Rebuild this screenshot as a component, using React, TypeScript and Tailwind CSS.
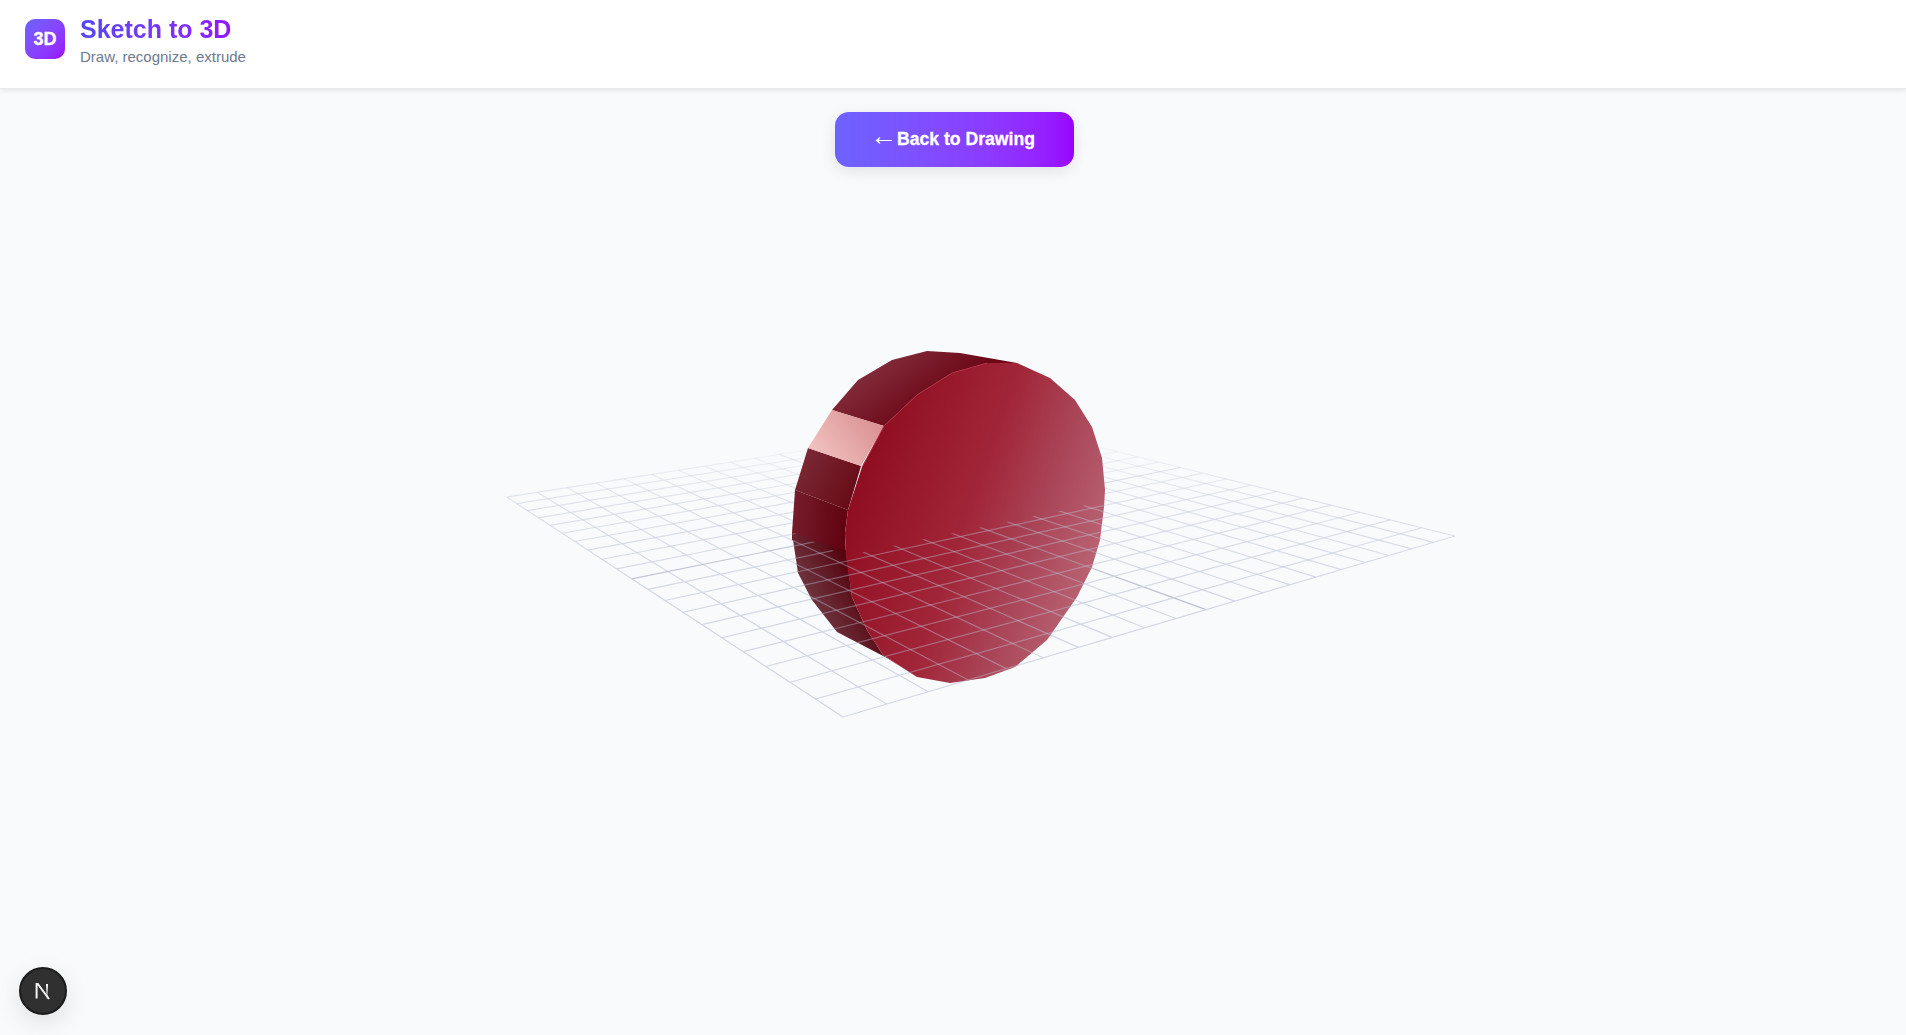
import React from "react"

type Pt = [number, number]

// floor grid corners as seen in the picture: left, front, right, back
const L: Pt = [506.7, 497]
const B: Pt = [843, 717]
const R: Pt = [1455, 536]
const T: Pt = [994, 421]

const project = (u: number, v: number): Pt => {
  const dx1 = B[0] - R[0]
  const dx2 = T[0] - R[0]
  const sx = L[0] - B[0] + R[0] - T[0]
  const dy1 = B[1] - R[1]
  const dy2 = T[1] - R[1]
  const sy = L[1] - B[1] + R[1] - T[1]
  const den = dx1 * dy2 - dx2 * dy1
  const g = (sx * dy2 - dx2 * sy) / den
  const h = (dx1 * sy - sx * dy1) / den
  const a = B[0] - L[0] + g * B[0]
  const b = T[0] - L[0] + h * T[0]
  const d = B[1] - L[1] + g * B[1]
  const e = T[1] - L[1] + h * T[1]
  const w = g * u + h * v + 1
  return [(a * u + b * v + L[0]) / w, (d * u + e * v + L[1]) / w]
}

const DIVISIONS = 20
const gridLines = Array.from({ length: DIVISIONS + 1 }, (_, i) => i / DIVISIONS).flatMap((t, i) => [
  { key: `u${i}`, from: project(t, 0), to: project(t, 1), center: i === DIVISIONS / 2 },
  { key: `v${i}`, from: project(0, t), to: project(1, t), center: i === DIVISIONS / 2 },
])

const points = (pts: Pt[]) => pts.map((p) => p.join(",")).join(" ")

const FACE: Pt[] = [
  [987, 363], [1017, 363], [1050, 378], [1075, 400], [1092, 427], [1102, 458], [1105, 490], [1104, 507],
  [1100, 540], [1092, 567], [1077, 597], [1047, 640], [1015, 667], [985, 678], [950, 683], [917, 677],
  [883, 655], [867, 630], [852, 597], [846, 557], [845, 533], [848, 510], [862, 467], [884, 426], [917, 395], [952, 373],
]

const SILHOUETTE: Pt[] = [
  [927, 351], [960, 353], [1017, 363], [1050, 378], [1075, 400], [1092, 427], [1102, 458], [1105, 490], [1104, 507],
  [1100, 540], [1092, 567], [1077, 597], [1047, 640], [1015, 667], [985, 678], [950, 683], [917, 677], [887, 658],
  [837, 632], [812, 600], [798, 573], [792, 533], [795, 490], [808, 448], [832, 410], [858, 380], [892, 360],
]

const FRONT_OF_DISC: Pt[] = [[770, 522], [845, 556], [1120, 498], [1120, 720], [770, 720]]

const GridLines = ({ normal, center, width }: { normal: string; center: string; width: number }) => (
  <>
    {gridLines.map((l) => (
      <line
        key={l.key}
        x1={l.from[0]}
        y1={l.from[1]}
        x2={l.to[0]}
        y2={l.to[1]}
        stroke={l.center ? center : normal}
        strokeWidth={width}
      />
    ))}
  </>
)

const Scene = () => (
  <svg viewBox="0 167 1906 868" className="block h-[868px] w-[1906px] shrink-0">
    <defs>
      <linearGradient id="gridFade" gradientUnits="userSpaceOnUse" x1="0" y1="425" x2="0" y2="600">
        <stop offset="0" stopColor="#cfd6e3" stopOpacity="0" />
        <stop offset="0.45" stopColor="#cfd6e3" stopOpacity="0.65" />
        <stop offset="1" stopColor="#cfd6e3" stopOpacity="0.95" />
      </linearGradient>
      <linearGradient id="gridFadeDark" gradientUnits="userSpaceOnUse" x1="0" y1="425" x2="0" y2="600">
        <stop offset="0" stopColor="#bac1cf" stopOpacity="0" />
        <stop offset="0.45" stopColor="#bac1cf" stopOpacity="0.7" />
        <stop offset="1" stopColor="#bac1cf" stopOpacity="1" />
      </linearGradient>
      <linearGradient id="face" gradientUnits="userSpaceOnUse" x1="860" y1="450" x2="1120" y2="540">
        <stop offset="0" stopColor="#8f0c20" />
        <stop offset="0.45" stopColor="#a12538" />
        <stop offset="0.7" stopColor="#aa4558" />
        <stop offset="1" stopColor="#bc6a78" />
      </linearGradient>
      <linearGradient id="rimTop" gradientUnits="userSpaceOnUse" x1="860" y1="365" x2="905" y2="425">
        <stop offset="0" stopColor="#85303f" />
        <stop offset="1" stopColor="#6c0716" />
      </linearGradient>
      <linearGradient id="rimGlint" gradientUnits="userSpaceOnUse" x1="880" y1="420" x2="825" y2="462">
        <stop offset="0" stopColor="#d98f90" />
        <stop offset="1" stopColor="#f0bfbe" />
      </linearGradient>
      <linearGradient id="rimMid" gradientUnits="userSpaceOnUse" x1="805" y1="465" x2="855" y2="490">
        <stop offset="0" stopColor="#782632" />
        <stop offset="1" stopColor="#680d18" />
      </linearGradient>
      <linearGradient id="rimSide" gradientUnits="userSpaceOnUse" x1="793" y1="520" x2="846" y2="525">
        <stop offset="0" stopColor="#741c2a" />
        <stop offset="1" stopColor="#620210" />
      </linearGradient>
      <linearGradient id="rimLow" gradientUnits="userSpaceOnUse" x1="805" y1="615" x2="860" y2="585">
        <stop offset="0" stopColor="#74404a" />
        <stop offset="1" stopColor="#560510" />
      </linearGradient>
      <clipPath id="frontRegion">
        <polygon points={points(FRONT_OF_DISC)} />
      </clipPath>
      <clipPath id="discShape">
        <polygon points={points(SILHOUETTE)} />
      </clipPath>
    </defs>

    <GridLines normal="url(#gridFade)" center="url(#gridFadeDark)" width={1.2} />

    {/* rim facets, back to front */}
    <polygon fill="url(#rimTop)" points="927,351 960,353 1017,363 987,363 952,373 917,395 884,426 832,410 858,380 892,360" />
    <polygon fill="url(#rimMid)" points="808,448 861,466 848,510 795,490" />
    <polygon fill="url(#rimSide)" points="795,490 848,510 845,533 846,557 792,540 792,533" />
    <polygon fill="url(#rimLow)" points="792,533 846,550 852,597 867,630 883,655 917,677 887,658 837,632 812,600 798,573" />
    <polygon fill="url(#rimGlint)" points="832,410 884,426 861,466 808,448" />

    <polygon fill="url(#face)" points={points(FACE)} />
    <polyline fill="none" stroke="#ad2c40" strokeWidth={0.8} points="862,467 884,426 917,395 952,373 987,363" />

    {/* part of the floor that lies in front of the disc */}
    <g clipPath="url(#frontRegion)">
      <g clipPath="url(#discShape)">
        <GridLines normal="rgba(190,197,220,0.42)" center="rgba(180,186,210,0.45)" width={1.2} />
      </g>
    </g>
  </svg>
)

export default function App() {
  return (
    <div className="flex h-screen flex-col overflow-hidden bg-[#f9fafb] font-['Liberation_Sans',Arial,sans-serif]">
      <header className="z-10 flex h-[89px] shrink-0 items-center gap-[15px] border-b border-[#e8e9ec] bg-white px-[25px] pb-[10px] shadow-[0_2px_4px_rgba(0,0,0,0.08)]">
        <div className="flex h-10 w-10 items-center justify-center rounded-[10px] bg-linear-to-br from-[#6c63ff] to-[#9900ff] text-[18px] font-bold text-white [-webkit-text-stroke:0.3px_white]">
          3D
        </div>
        <div className="mt-1 flex flex-col">
          <h1 className="bg-linear-to-r from-[#5546f5] to-[#9900ff] bg-clip-text text-[25px] leading-[30px] font-bold text-transparent">
            Sketch to 3D
          </h1>
          <p className="mt-px text-[15px] leading-6 text-[#6b7a90]">Draw, recognize, extrude</p>
        </div>
      </header>

      <main className="flex flex-1 flex-col items-center pt-[23px]">
        <button className="ml-[2px] flex h-[55px] w-[239px] shrink-0 items-center justify-center rounded-[14px] bg-linear-to-r from-[#6c63ff] to-[#9900ff] pr-[3px] text-[17.6px] font-bold text-white shadow-[0_4px_15px_rgba(0,0,0,0.1)]">
          <span className="-translate-y-[3px] font-['Liberation_Serif',serif] text-[27px] leading-none font-normal">←</span>
          <span className="[-webkit-text-stroke:0.3px_white]">Back to Drawing</span>
        </button>
        <Scene />
      </main>

      <div className="fixed bottom-5 left-[19px] flex h-12 w-12 items-center justify-center rounded-full border-2 border-[#1c1c1c] bg-[#303030] shadow-[0_8px_24px_rgba(0,0,0,0.1)]">
        <svg width="18" height="18" viewBox="0 0 18 18" fill="none">
          <defs>
            <linearGradient id="nextFade" x1="0" y1="0" x2="0" y2="1">
              <stop offset="0" stopColor="#fff" />
              <stop offset="1" stopColor="#fff" stopOpacity="0.1" />
            </linearGradient>
          </defs>
          <path d="M2.6 16.5V2H3.8L15 17" stroke="#f2f2f2" strokeWidth={2} />
          <rect x="12" y="2" width="2" height="15" fill="url(#nextFade)" />
        </svg>
      </div>
    </div>
  )
}
